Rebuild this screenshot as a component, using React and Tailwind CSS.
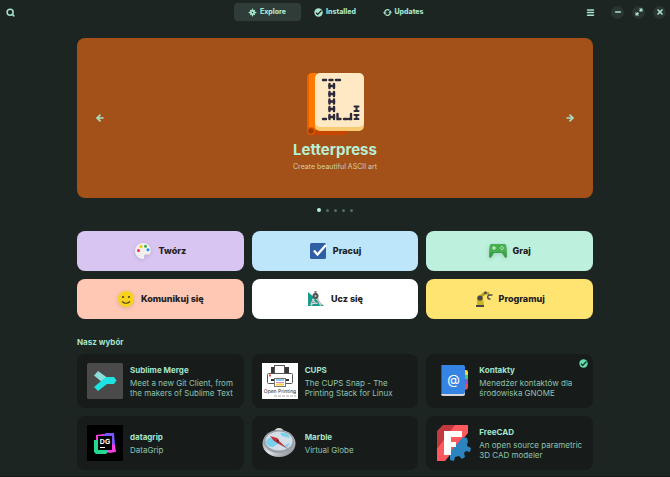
import { Menu, Minus, X, ArrowLeft, ArrowRight, Search } from 'lucide-react';

const tabs = [
    { name: 'Explore', icon: ExploreIcon, active: true },
    { name: 'Installed', icon: CheckIcon },
    { name: 'Updates', icon: UpdatesIcon },
];

const categories = [
    { name: 'Twórz', icon: PaletteIcon, color: 'bg-[#d9c5f2]' },
    { name: 'Pracuj', icon: TaskIcon, color: 'bg-[#bee6fb]' },
    { name: 'Graj', icon: GamepadIcon, color: 'bg-[#bdf1dd]' },
    { name: 'Komunikuj się', icon: SmileIcon, color: 'bg-[#fec8b5]' },
    { name: 'Ucz się', icon: LearnIcon, color: 'bg-white' },
    { name: 'Programuj', icon: RobotIcon, color: 'bg-[#ffe471]' },
];

const apps = [
    { name: 'Sublime Merge', summary: 'Meet a new Git Client, from the makers of Sublime Text', icon: SublimeIcon },
    { name: 'CUPS', summary: 'The CUPS Snap - The Printing Stack for Linux', icon: CupsIcon },
    { name: 'Kontakty', summary: 'Menedżer kontaktów dla środowiska GNOME', icon: ContactsIcon, installed: true },
    { name: 'datagrip', summary: 'DataGrip', icon: DatagripIcon },
    { name: 'Marble', summary: 'Virtual Globe', icon: MarbleIcon },
    { name: 'FreeCAD', summary: 'An open source parametric 3D CAD modeler', icon: FreecadIcon },
];

function ExploreIcon() {
    return (
        <svg className="size-[9px]" viewBox="0 0 16 16" fill="currentColor">
            <path d="M8 0l1.8 4 3-.8-.8 3L16 8l-4 1.8.8 3-3-.8L8 16l-1.800-4-3 .8.8-3L0 8l4-1.800-.8-3 3 .8z" />
            <circle cx="8" cy="8" r="1.300" fill="#2f3c38" />
        </svg>
    );
}

function CheckIcon() {
    return (
        <svg className="size-[9px]" viewBox="0 0 16 16">
            <circle cx="8" cy="8" r="7.500" fill="currentColor" />
            <path d="M3.500 8.500l3.200 3 6.500-7" fill="none" stroke="#1d2523" strokeWidth="2.200" />
        </svg>
    );
}

function UpdatesIcon() {
    return (
        <svg className="size-[9px]" viewBox="0 0 16 16" fill="none" stroke="currentColor" strokeWidth="2.400">
            <path d="M3 8a5 5 0 0 1 8.500-3.500M13 8a5 5 0 0 1-8.500 3.500" />
            <path d="M0 7.500h6.500L3 12zM16 8.500H9.500L13 4z" fill="currentColor" stroke="none" />
        </svg>
    );
}

function RestoreIcon() {
    return (
        <svg className="size-2" viewBox="0 0 16 16" fill="currentColor">
            <path d="M8 1h7v7l-2.500-2-2 2L8 5.500l2-2zM8 15H1V8l2.500 2 2-2L8 10.500l-2 2z" />
        </svg>
    );
}

function LetterpressIcon() {
    return (
        <svg className="h-16 w-15" viewBox="0 0 60 64">
            <path d="M5 54h38v4a5 5 0 0 1-5 5H6z" fill="#c64600" />
            <path d="M2 6a5 5 0 0 1 5-5h5v57H5l-3 2z" fill="#ff7800" />
            <path d="M2 6a5 5 0 0 1 2-4v55l-2 2z" fill="#e66100" />
            <circle cx="6" cy="59" r="4" fill="#e05a00" />
            <circle cx="6" cy="59" r="2.800" fill="#a33b00" />
            <rect x="10" y="3" width="49" height="56" rx="5" fill="#f8cb72" />
            <rect x="10" y="1" width="49" height="54" rx="5" fill="#ffe9c4" />
            <g fill="none" stroke="#2d2939" strokeWidth="2.400" strokeLinecap="round">
                <path d="M18 8h3M24.500 8h3M31 8h4" />
                <path d="M24.500 12v4M24.500 20v4M24.500 27.500v4M24.500 35v4M24.500 43v4" />
                <path d="M29 12v4M29 20v4M29 27.500v4M29 35v4M29 43v4" />
                <path d="M24.500 14H29M24.500 22H29M24.500 29.500H29M24.500 37H29M24.500 45H29" />
                <path d="M18 47h3M32.500 42v5h3M39 47h3M46 42v5h-2" />
                <path d="M49.500 34.500h4M49.500 39h4M51.500 34.500v4M49.500 43h4M49.500 47h4M51.500 43v4" strokeWidth="2" />
            </g>
        </svg>
    );
}

function PaletteIcon() {
    return (
        <svg className="size-[18px] drop-shadow-sm" viewBox="0 0 18 18">
            <path d="M9 1a8 8 0 1 0 0 16c2 0 .8-2.500 1.300-3.600.7-1.700 3-.7 5-1A7.500 7.500 0 0 0 17 9c0-4.500-3.500-8-8-8z" fill="#f1f0ee" />
            <circle cx="4.500" cy="8.500" r="1.500" fill="#e5323b" />
            <circle cx="7" cy="4.500" r="1.500" fill="#f5c211" />
            <circle cx="11.500" cy="4.300" r="1.500" fill="#33b04a" />
            <circle cx="14" cy="7.800" r="1.500" fill="#2190ff" />
        </svg>
    );
}

function TaskIcon() {
    return (
        <svg className="size-[18px] overflow-visible" viewBox="0 0 18 18">
            <rect x="1" y="1" width="16" height="16" rx="1.500" fill="#2e5fa5" />
            <path d="M5 8.500l3.500 4 8.500-9.500" fill="none" stroke="#fff" strokeWidth="2.400" />
        </svg>
    );
}

function GamepadIcon() {
    return (
        <svg className="size-[18px] drop-shadow-sm" viewBox="0 0 18 18">
            <path d="M3 2h12c1.500 0 2 1 2.200 2.500L18 14c0 2-1.500 2.500-2.500 1L13 11H5l-2.500 4C1.500 16.500 0 16 0 14L.8 4.500C1 3 1.500 2 3 2z" fill="#3c9e45" />
            <path d="M3 2h12c1.500 0 2 1 2.200 2.500L17.700 10H.3L.8 4.500C1 3 1.500 2 3 2z" fill="#46af50" />
            <path d="M5 4v4M3 6h4" stroke="#d6f2d9" strokeWidth="1.200" />
            <g fill="#c3e8c7">
                <circle cx="13" cy="4.500" r=".8" />
                <circle cx="13" cy="7.500" r=".8" />
                <circle cx="11.500" cy="6" r=".8" />
                <circle cx="14.500" cy="6" r=".8" />
            </g>
        </svg>
    );
}

function SmileIcon() {
    return (
        <svg className="size-[18px] drop-shadow-sm" viewBox="0 0 18 18">
            <circle cx="9" cy="9" r="8" fill="#f8d21c" />
            <circle cx="6" cy="7" r="1.100" fill="#4c4320" />
            <circle cx="12" cy="7" r="1.100" fill="#4c4320" />
            <path d="M5 11.500q4 3.500 8 0" fill="none" stroke="#4c4320" strokeWidth="1.200" />
        </svg>
    );
}

function LearnIcon() {
    return (
        <svg className="size-[18px]" viewBox="0 0 18 18">
            <path d="M1 2l16 14H1z" fill="#159a8c" />
            <path d="M5 9v5h6z" fill="#d9f0ed" />
            <path d="M8 6L4 15.500M9 6l5 9.500" stroke="#c8c9cb" strokeWidth="2" />
            <path d="M5 12q3 2 7 0" fill="none" stroke="#8a8f91" />
            <rect x="7.500" y="1" width="2" height="3" fill="#777" />
            <circle cx="8.500" cy="6" r="3" fill="#4d5355" />
            <circle cx="8.500" cy="6" r="1" fill="#ccc" />
        </svg>
    );
}

function RobotIcon() {
    return (
        <svg className="size-[18px]" viewBox="0 0 18 18">
            <path d="M4 8L10 3" stroke="#b5a11b" strokeWidth="3" />
            <path d="M2 8a3 3 0 0 1 6 0l1 7H2z" fill="#cbb526" />
            <path d="M10 2h4l1 4-3-1z" fill="#c0aa20" />
            <circle cx="5" cy="8" r="2.600" fill="#46464b" />
            <circle cx="10.500" cy="2.800" r="1.500" fill="#4d4d52" />
            <path d="M17.500 5h-2.500a2 2 0 0 0-.5 4h1" fill="none" stroke="#4d4d52" strokeWidth="1.400" />
            <rect x="1" y="15" width="8" height="2" fill="#46464b" />
        </svg>
    );
}

function SublimeIcon() {
    return (
        <svg className="size-9" viewBox="0 0 36 36">
            <rect width="36" height="36" rx="1.500" fill="#4a4a4a" />
            <path d="M7 12.500L11 8l9 6.500-1 5-3 .5z" fill="#8bdcdc" />
            <path d="M7 24l12-10h8l2.500 3.500L27 21h-7l-9 7z" fill="#1de3e3" />
        </svg>
    );
}

function CupsIcon() {
    return (
        <svg className="size-9" viewBox="0 0 36 36">
            <rect width="36" height="36" fill="#fff" />
            <rect x="9" y="4" width="18" height="7" fill="#38383a" />
            <rect x="12.500" y="2.500" width="10" height="8" fill="#fff" stroke="#555" />
            <rect x="5.500" y="10.500" width="25" height="10" rx="1" fill="#fff" stroke="#555" />
            <path d="M9 17h18" stroke="#333" strokeWidth="2" />
            <path d="M7 12.500h2" stroke="#e34b4b" strokeWidth="2" />
            <rect x="12.500" y="15.500" width="11" height="8" fill="#fff" stroke="#777" />
            <path d="M14 17h8" stroke="#91c4ee" strokeWidth="2" />
            <path d="M14 19.500h8" stroke="#d98cc0" />
            <path d="M14 21.500h8" stroke="#f4cf4d" strokeWidth="2" />
            <text x="18" y="30" textAnchor="middle" fontSize="5" fill="#222" textRendering="geometricPrecision">Open Printing</text>
            <path d="M12 33h22" stroke="#aaa" strokeDasharray="3 1" />
        </svg>
    );
}

function ContactsIcon() {
    return (
        <svg className="size-9" viewBox="0 0 36 36">
            <path d="M28 7h2q2 0 2 2v3h-4z" fill="#f6d32d" />
            <path d="M28 12h4v4h-4z" fill="#33d17a" />
            <path d="M28 16h4v5h-4z" fill="#9b4fc4" />
            <path d="M28 21h4v3q0 3-4 3z" fill="#ed4b55" />
            <rect x="5" y="6" width="24" height="27" rx="2" fill="#d5d5d8" />
            <path d="M5 2h22q2 0 2 2v25q0 2-2 2H5z" fill="#3584e4" />
            <path d="M5 2h1v29H5z" fill="#1a5fb4" />
            <text x="17.500" y="20.500" textAnchor="middle" fontSize="13" fill="#fff">@</text>
        </svg>
    );
}

function DatagripIcon() {
    return (
        <svg className="size-9" viewBox="0 0 36 36">
            <rect width="36" height="36" fill="#000" />
            <path d="M9 10l8-1 11 11 1 7-7 1-13-12z" fill="#f93de0" />
            <path d="M16 10l3-2h8l1 12-3-1-8-8z" fill="#7b55ff" />
            <path d="M7 15h4v10h10v2l-2 2H9l-2-2z" fill="#22d88f" />
            <rect x="11" y="11" width="14" height="14" fill="#000" />
            <text x="18" y="18.500" textAnchor="middle" fontSize="7" fontWeight="700" fill="#fff" textRendering="geometricPrecision">DG</text>
            <path d="M13 22.500h5" stroke="#fff" />
        </svg>
    );
}

function MarbleIcon() {
    return (
        <svg className="size-9" viewBox="0 0 36 36">
            <defs>
                <linearGradient id="rim" x1="0" y1="0" x2="1" y2="1">
                    <stop offset="0" stopColor="#73777b" />
                    <stop offset=".5" stopColor="#e1e3e5" />
                    <stop offset="1" stopColor="#777c81" />
                </linearGradient>
            </defs>
            <ellipse cx="17" cy="5.500" rx="4" ry="2.500" fill="#d5d7d9" />
            <ellipse cx="17" cy="18.500" rx="16.500" ry="13.500" fill="url(#rim)" />
            <ellipse cx="17" cy="16.500" rx="15.500" ry="11.500" fill="#9aa1a8" />
            <ellipse cx="17" cy="16" rx="13.500" ry="9.500" fill="#d3dee6" />
            <path d="M4 17q2-6 8-4l5 5-6 4q-6 0-7-5zM18 8q8-1 10 5l-8-2zM23 20l5-2-3 5z" fill="#79cfee" />
            <path d="M8 11l7 2 2 2-1 3-4-2z" fill="#c92e34" />
            <path d="M16 15l10 9-11-6z" fill="#b04046" />
            <circle cx="15.500" cy="16" r="1.500" fill="#7c2025" />
        </svg>
    );
}

function FreecadIcon() {
    return (
        <svg className="size-9" viewBox="0 0 36 36">
            <path d="M7 0h15L1 25V6z" fill="#c4393f" />
            <path d="M19 0h13v8L9 36H1V24z" fill="#ff585d" />
            <path d="M31 13l-4-1-13 15v8l4 1 1-4 4-1 3 3 3-2-1-4 2-2 4 1 1-4-4-2v-2l1-2z" fill="#2b84bd" />
            <path d="M8 6h18v6H15v5h5v5h-5v8H8z" fill="#fff" />
        </svg>
    );
}

export default function App() {
    return (
        <div className="min-h-screen border-b border-[#171a1a] bg-[#1d2523] font-['Inter',sans-serif] text-[#a5e3ca]">
            {/* Header bar */}
            <header className="grid h-6 grid-cols-[1fr_auto_1fr] items-center px-1">
                <button aria-label="Search" className="w-fit px-[2px]">
                    <Search className="size-[9px]" strokeWidth={4} />
                </button>
                <nav className="flex gap-px">
                    {tabs.map((tab) => (
                        <button
                            key={tab.name}
                            className={`flex h-[18px] w-[67px] items-center justify-center gap-[3px] rounded text-[7px] font-extrabold ${tab.active ? 'bg-[#2f3c38]' : ''}`}
                        >
                            <tab.icon />
                            {tab.name}
                        </button>
                    ))}
                </nav>
                <div className="flex items-center justify-end gap-2">
                    <button aria-label="Menu" className="mr-2">
                        <Menu className="size-[9px]" strokeWidth={4} />
                    </button>
                    <button aria-label="Minimize" className="grid size-[13px] place-items-center rounded-full bg-[#2a3431]">
                        <Minus className="size-2" strokeWidth={5} />
                    </button>
                    <button aria-label="Restore" className="grid size-[13px] place-items-center rounded-full bg-[#2a3431]">
                        <RestoreIcon />
                    </button>
                    <button aria-label="Close" className="grid size-[13px] place-items-center rounded-full bg-[#2a3431]">
                        <X className="size-2" strokeWidth={5} />
                    </button>
                </div>
            </header>

            <main className="px-[77px] pt-[14px] pb-[5px]">
                {/* Featured app */}
                <section className="flex h-40 items-center justify-between rounded-lg bg-[#a35118] px-[18px]">
                    <button aria-label="Previous">
                        <ArrowLeft className="size-[10px]" strokeWidth={4} />
                    </button>
                    <div className="flex flex-col items-center pt-[7px]">
                        <LetterpressIcon />
                        <h1 className="mt-1 text-[15px] leading-5 font-bold text-[#b6f0d5]">Letterpress</h1>
                        <p className="mt-[2px] text-[7px] leading-[10px] text-[#d5cfa9]">Create beautiful ASCII art</p>
                    </div>
                    <button aria-label="Next">
                        <ArrowRight className="size-[10px]" strokeWidth={4} />
                    </button>
                </section>
                <div className="flex h-6 items-center justify-center gap-[5px]">
                    <span className="size-1 rounded-full bg-[#b6f0d5]" />
                    {[1, 2, 3, 4].map((dot) => (
                        <span key={dot} className="size-[3px] rounded-full bg-[#4f6c61]" />
                    ))}
                </div>

                {/* Categories */}
                <div className="mt-[9px] grid grid-cols-3 gap-2">
                    {categories.map((category) => (
                        <button
                            key={category.name}
                            className={`flex h-10 items-center justify-center gap-[6px] rounded-lg text-[9px] font-extrabold text-[#1f211f] ${category.color}`}
                        >
                            <category.icon />
                            {category.name}
                        </button>
                    ))}
                </div>

                {/* Editor's picks */}
                <h2 className="mt-[17px] text-[8px] leading-3 font-bold">Nasz wybór</h2>
                <div className="mt-[6px] grid grid-cols-3 gap-2">
                    {apps.map((app) => (
                        <a key={app.name} href="#" className="relative flex h-[54px] items-center gap-[7px] rounded-lg bg-[#171c1a] pl-[10px]">
                            <app.icon />
                            <div className="text-[8px] leading-[10px]">
                                <h3 className="mb-[3px] font-bold">{app.name}</h3>
                                <p className="max-w-[106px] text-[#8fc2ae]">{app.summary}</p>
                            </div>
                            {app.installed && (
                                <span className="absolute top-[5px] right-[5px] text-[#63dcab]">
                                    <CheckIcon />
                                </span>
                            )}
                        </a>
                    ))}
                </div>
            </main>
        </div>
    );
}
